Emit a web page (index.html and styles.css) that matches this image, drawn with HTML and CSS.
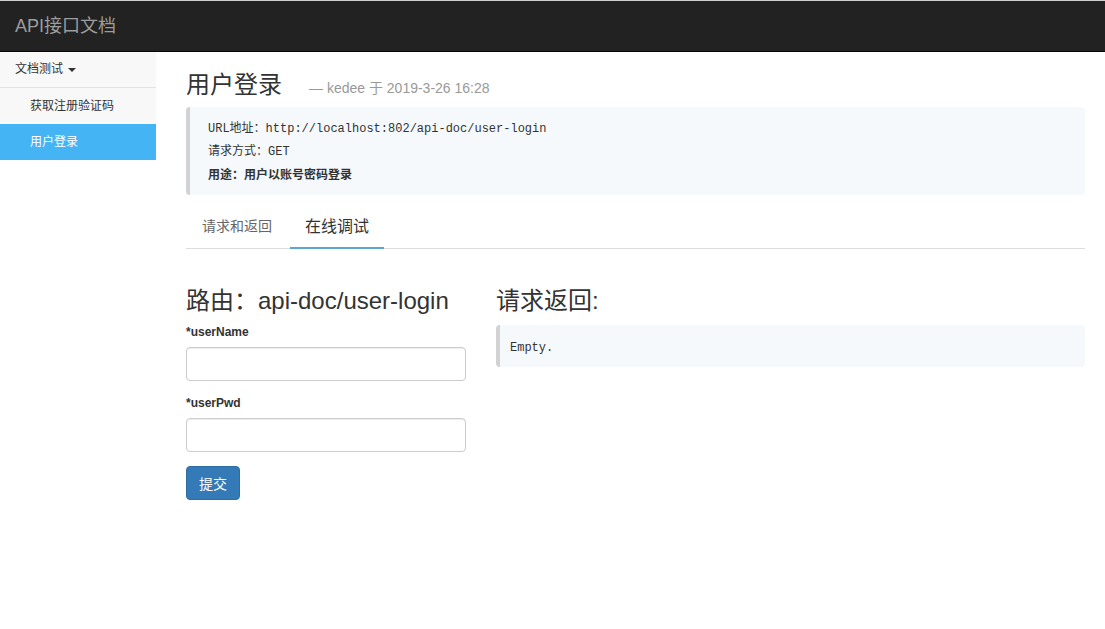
FILE: index.html
```html
<!DOCTYPE html>
<html lang="zh-CN">
<head>
<meta charset="utf-8">
<title>API接口文档</title>
<link rel="stylesheet" href="styles.css">
</head>
<body>
<header class="navbar">
  <div class="brand">API接口文档</div>
</header>
<div class="layout">
  <aside class="sidebar">
    <div class="side-group">文档测试 <span class="caret"></span></div>
    <div class="side-item">获取注册验证码</div>
    <div class="side-item active">用户登录</div>
  </aside>
  <main class="main">
    <div class="title-row">
      <h1 class="title">用户登录</h1>
      <span class="meta">— kedee 于 2019-3-26 16:28</span>
    </div>
    <div class="info">
      <div class="info-line">URL地址：http://localhost:802/api-doc/user-login</div>
      <div class="info-line">请求方式：GET</div>
      <div class="info-line strong">用途：用户以账号密码登录</div>
    </div>
    <nav class="tabs">
      <div class="tab tab-first">请求和返回</div>
      <div class="tab active">在线调试</div>
    </nav>
    <div class="cols">
      <section class="col">
        <h2 class="sub">路由：api-doc/user-login</h2>
        <label class="label">*userName</label>
        <input class="input" type="text">
        <label class="label">*userPwd</label>
        <input class="input" type="text">
        <button class="btn">提交</button>
      </section>
      <section class="col">
        <h2 class="sub">请求返回:</h2>
        <pre class="result">Empty.</pre>
      </section>
    </div>
  </main>
</div>
</body>
</html>
```

FILE: styles.css
```css
* { box-sizing: border-box; }
html, body { margin: 0; padding: 0; }
body {
  font-family: "Liberation Sans", "Noto Sans CJK SC", sans-serif;
  font-size: 14px;
  color: #333;
  background: #fff;
}
.navbar {
  height: 52px;
  background: #222;
  border-top: 1px solid #cfcfcf;
  border-bottom: 1px solid #080808;
  display: flex;
  align-items: center;
  padding-left: 15px;
}
.brand {
  color: #9d9d9d;
  font-size: 18px;
  line-height: 20px;
  padding-bottom: 1px;
}
.layout {
  display: flex;
  align-items: flex-start;
}
.sidebar {
  width: 156px;
  flex: none;
  background: #f8f8f8;
  font-size: 12px;
}
.side-group {
  height: 36px;
  line-height: 34px;
  padding-left: 15px;
  color: #333;
  border-bottom: 1px solid #e2e2e2;
}
.caret {
  display: inline-block;
  width: 0;
  height: 0;
  margin-left: 2px;
  vertical-align: middle;
  border-top: 4px solid #333;
  border-left: 4px solid transparent;
  border-right: 4px solid transparent;
}
.side-item {
  height: 36px;
  line-height: 36px;
  padding-left: 30px;
  color: #333;
}
.side-item.active {
  background: #45b4f4;
  color: #fff;
}
.main {
  flex: 1;
  padding: 17px 20px 0 30px;
}
.title-row {
  display: flex;
  align-items: baseline;
  gap: 27px;
}
.title {
  margin: 0;
  font-size: 24px;
  font-weight: normal;
  line-height: 32px;
  color: #333;
}
.meta {
  font-size: 14px;
  color: #999;
}
.info {
  margin-top: 6px;
  background: #f5f9fc;
  border-left: 4px solid #d2d2d2;
  border-radius: 4px;
  padding: 11px 18px 8px;
  font-family: "Liberation Mono", "Noto Sans CJK SC", monospace;
  font-size: 12px;
  color: #333;
}
.info-line { line-height: 23px; }
.info-line.strong {
  font-family: "Liberation Sans", "Noto Sans CJK SC", sans-serif;
  font-weight: bold;
  font-size: 12px;
}
.tabs {
  margin-top: 10px;
  display: flex;
  border-bottom: 1px solid #ddd;
}
.tab {
  height: 44px;
  line-height: 43px;
  padding: 0 15px;
  font-size: 16px;
  color: #333;
  margin-bottom: -1px;
}
.tab-first {
  font-size: 14px;
  color: #666;
  padding: 0 18px 0 16px;
}
.tab.active {
  border-bottom: 2px solid #5aa6d6;
}
.cols {
  margin-top: 38px;
  display: grid;
  grid-template-columns: 280px 1fr;
  gap: 30px;
}
.col { display: flex; flex-direction: column; align-items: flex-start; }
.sub {
  margin: 0;
  font-size: 24px;
  font-weight: normal;
  line-height: 28px;
  color: #333;
}
.label {
  margin-top: 9px;
  font-size: 12px;
  font-weight: bold;
  line-height: 17px;
  color: #333;
}
.label + .input { margin-top: 6px; }
.input + .label { margin-top: 14px; }
.input {
  width: 280px;
  height: 34px;
  border: 1px solid #ccc;
  border-radius: 4px;
  box-shadow: inset 0 1px 1px rgba(0,0,0,.075);
  padding: 6px 12px;
  font-size: 14px;
}
.btn {
  margin-top: 14px;
  height: 34px;
  padding: 0 12px;
  background: #337ab7;
  border: 1px solid #2e6da4;
  border-radius: 4px;
  color: #fff;
  font-family: "Liberation Sans", "Noto Sans CJK SC", sans-serif;
  font-size: 14px;
}
.result {
  margin: 10px 0 0;
  width: 100%;
  height: 42px;
  background: #f5f9fc;
  border-left: 4px solid #d2d2d2;
  border-radius: 4px;
  padding: 2px 10px 0;
  line-height: 42px;
  font-family: "Liberation Mono", monospace;
  font-size: 12px;
  color: #333;
}
```
